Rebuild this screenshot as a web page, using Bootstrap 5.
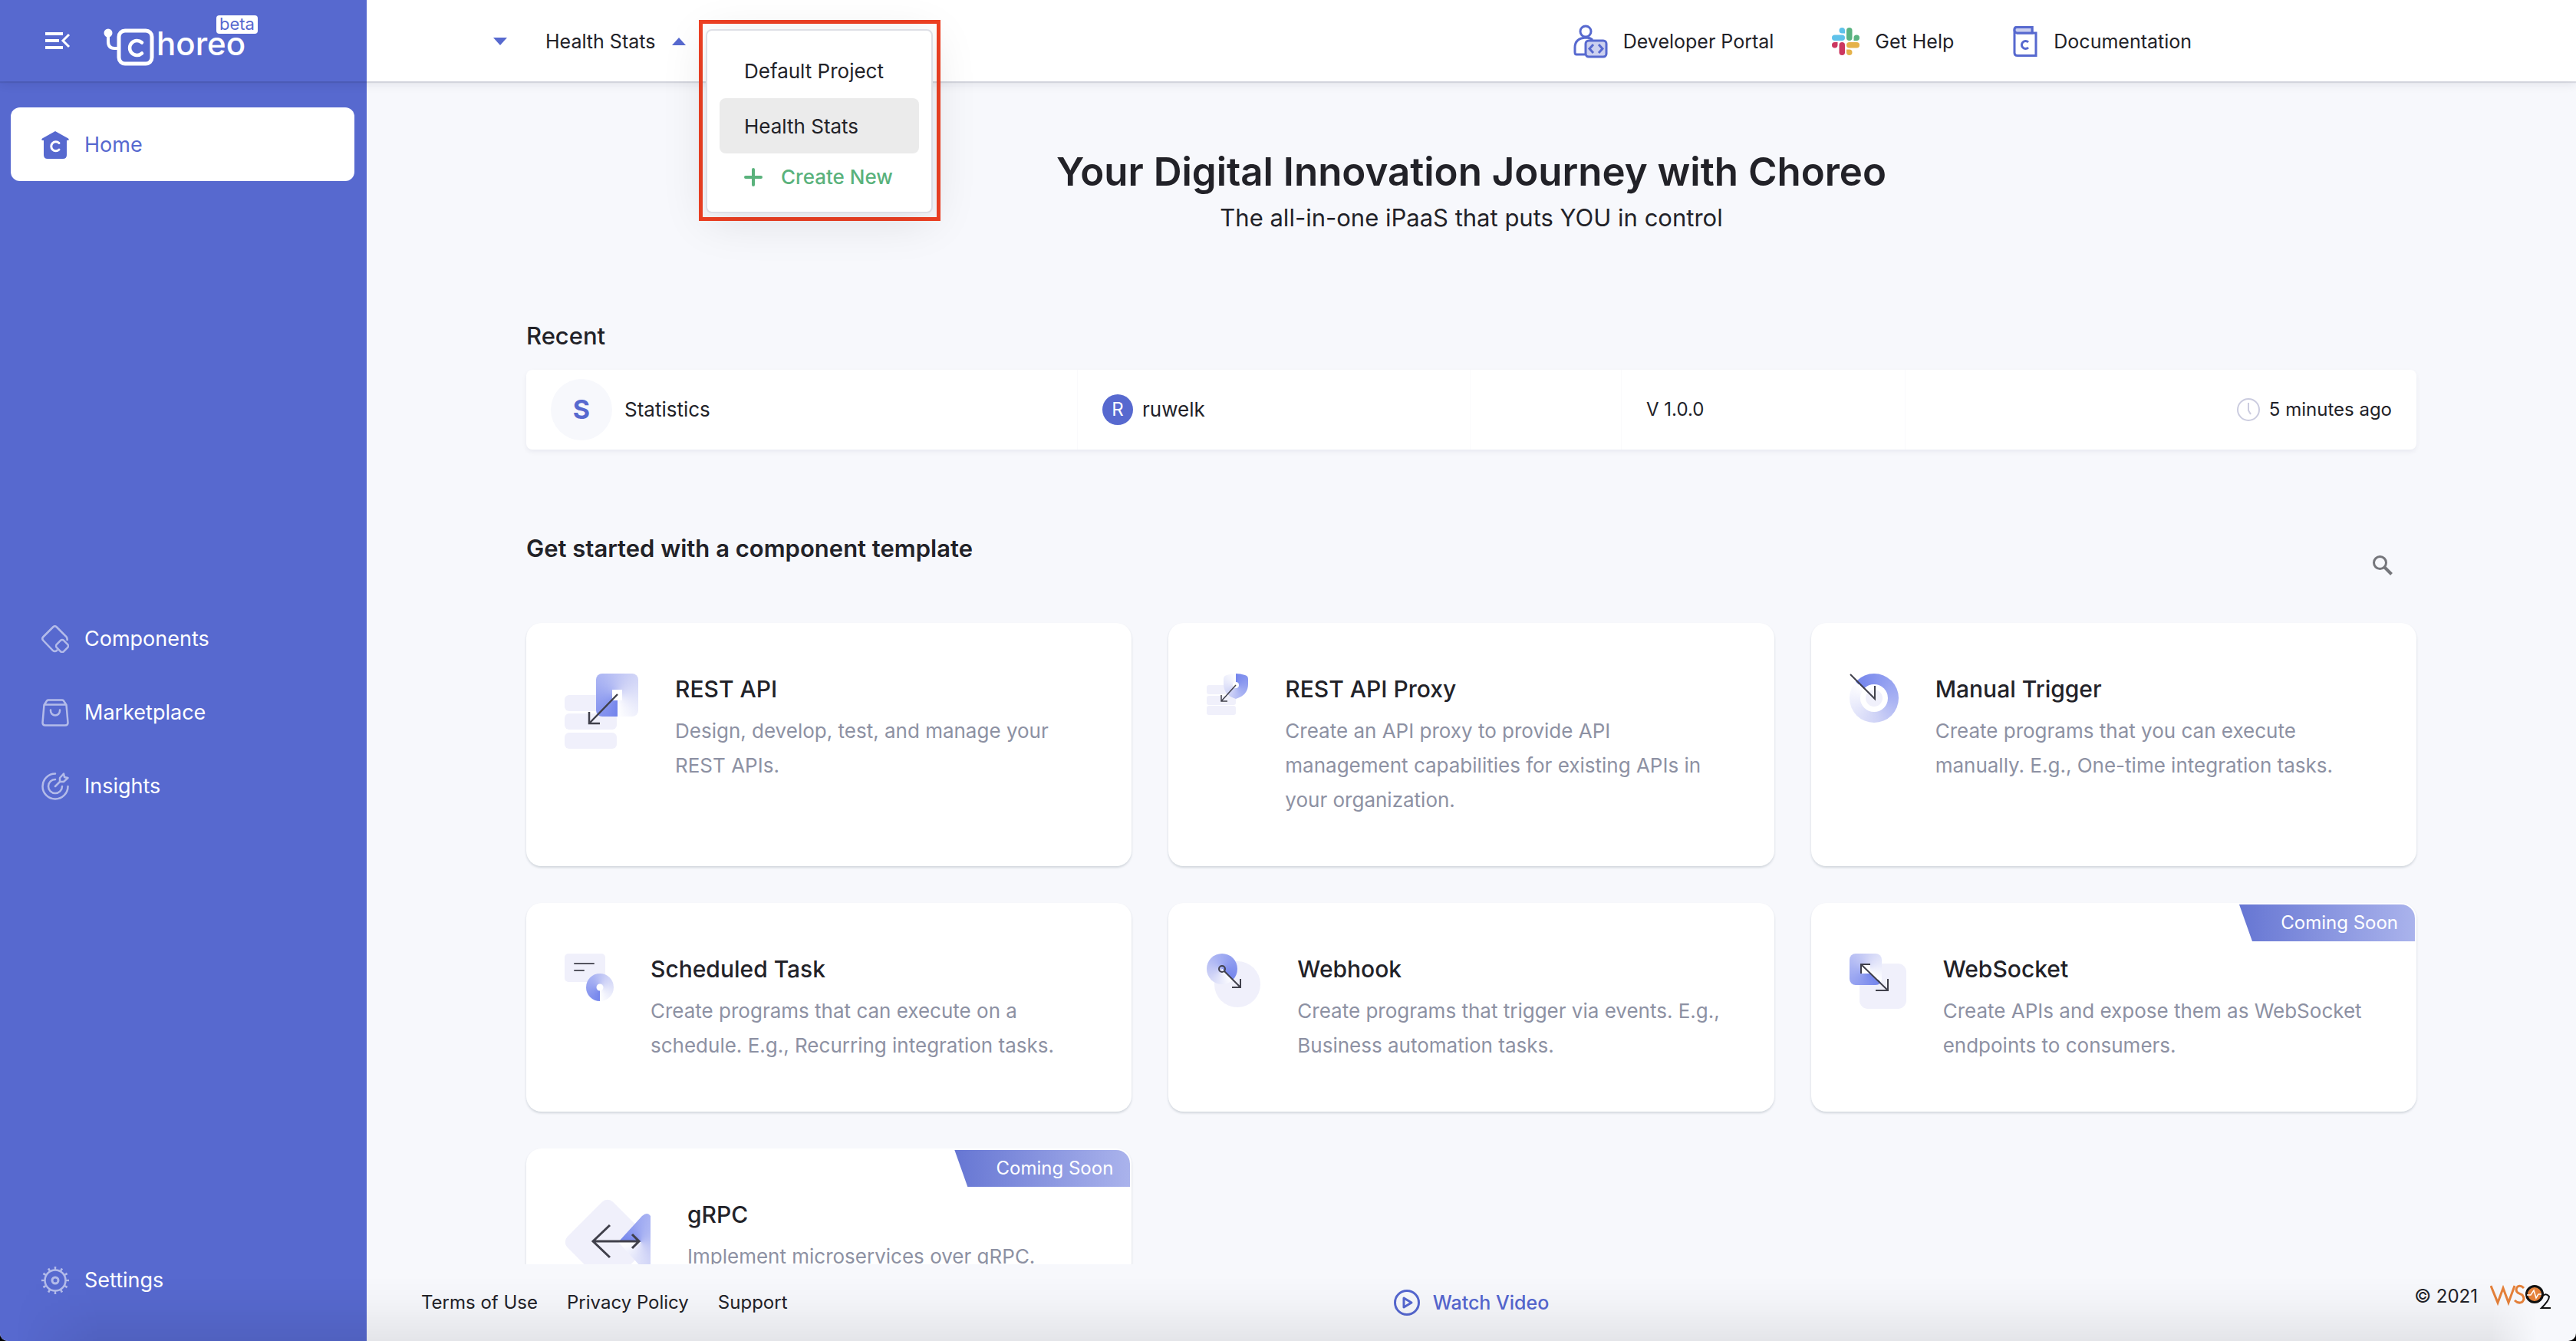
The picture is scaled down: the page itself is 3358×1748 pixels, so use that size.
<!DOCTYPE html>
<html lang="en">
<head>
<meta charset="utf-8">
<meta name="viewport" content="width=device-width, initial-scale=1">
<title>Choreo - Home</title>
<link href="https://cdn.jsdelivr.net/npm/bootstrap@5.3.0/dist/css/bootstrap.min.css" rel="stylesheet">
<style>
:root { --brand: #5769cf; --ink: #222228; --muted: #8d91a3; --page: #f7f8fc; }
html { background: #000; }
body { font-family: Inter, "Liberation Sans", sans-serif; font-size: 24px; line-height: 32px; color: var(--ink); background: #000; }
a { color: inherit; text-decoration: none; }
svg { display: block; flex: none; }
.app { height: 100vh; overflow: hidden; background: var(--page); border-radius: 0 0 10px 10px; }
.app::after { content: ""; position: absolute; inset: auto 0 0 0; height: 84px; pointer-events: none;
  background: linear-gradient(transparent, rgba(0,0,0,.02) 40%, rgba(0,0,0,.075));
  -webkit-mask-image: linear-gradient(90deg, transparent 20px, #000 130px, #000 calc(100% - 110px), transparent calc(100% - 50px)); }

/* header */
.topbar { height: 106px; z-index: 5; font-size: 25px; box-shadow: 0 2px 1px rgba(20,25,60,.10), 0 4px 12px rgba(20,25,60,.09); }
.brand { width: 478px; background: var(--brand); padding-left: 59px; gap: 42px; }
.logo { margin-top: 18px; }
.topmain { padding: 2px 501px 0 160px; }
.plain { border: 0; background: none; padding: 0; color: inherit; font: inherit; }
.beta { left: 147px; top: -15px; width: 54px; height: 24px; border-radius: 4px; background: #fff; color: var(--brand); font-size: 22px; line-height: 23px; text-align: center; }
.project { margin-left: 49px; gap: 21px; }
.picker { left: 911px; top: 26px; border: 5px solid #ee4023; padding: 7px 5px 5px 4px; width: 315px; }
.picker .dropdown-menu { position: static; width: 100%; min-width: 0; border: 2px solid #dedfe6; border-radius: 8px; padding: 16px; font-size: 26px; color: var(--ink); box-shadow: 0 10px 60px rgba(0,0,0,.10); }
.picker .dropdown-item { color: inherit; height: 72px; padding: 2px 0 0 32px; border-radius: 8px; display: flex; align-items: center; }
.picker .dropdown-item.active { background: #ebebeb; }
.picker .create { height: 60px; color: #5ab27c; font-weight: 500; gap: 24px; }
.toplinks { gap: 76px; }
.toplinks a { gap: 20px; }

/* sidebar */
.side { width: 478px; background: var(--brand); color: #fff; padding: 34px 16px 32px 14px; font-size: 27px; }
.side a { height: 96px; padding: 2px 0 0 40px; gap: 20px; border-radius: 12px; }
.side a.current { background: #fff; color: var(--brand); }
.side svg { opacity: .55; }
.side a.current svg { opacity: 1; }

/* content */
.work { min-height: 0; }
.pane { min-width: 0; }
.content { padding: 90px 208px 0; }
.hero { font-size: 51px; line-height: 56px; font-weight: 600; margin: 0; }
.tagline { font-size: 31px; line-height: 40px; margin: 12px 0 114px; }
.sect { font-size: 31px; line-height: 40px; font-weight: 500; margin: 0; }
.recent { display: grid; grid-template-columns: 718fr 512fr 197fr 370fr 667fr; margin: 24px 0 109px; height: 104px; background: #fff; border-radius: 8px; box-shadow: 0 3px 6px rgba(20,25,60,.06); }
.recent > div { padding: 0 32px; border-left: 1px solid #fafafc; gap: 12px; }
.recent > div:first-child { border: 0; gap: 16px; }
.name { font-size: 26px; }
.big-dot { width: 80px; height: 80px; background: var(--page); color: var(--brand); font-size: 34px; font-weight: 700; }
.small-dot { width: 40px; height: 40px; background: var(--brand); color: #fff; font-size: 24px; }
.finder { height: 117px; padding-right: 31px; }
.finder .sect { font-weight: 600; }
.finder button { margin-top: 29px; }
.tiles { display: grid; grid-template-columns: repeat(3, minmax(0, 1fr)); gap: 48px; }
.tile { background: #fff; border-radius: 20px; padding: 66px 50px 64px; gap: 48px; box-shadow: 0 2px 3px rgba(40,60,80,.18); }
.tile h3 { font-size: 30px; line-height: 40px; font-weight: 500; margin: 0 0 12px; }
.tile p { font-size: 26px; line-height: 45px; margin: 0; color: var(--muted); }
.ribbon { top: 2px; right: 2px; width: 229px; height: 48px; padding-right: 22px; border-top-right-radius: 18px; color: #fff; text-align: right; line-height: 48px;
  background: linear-gradient(90deg, #6676d3, #aab3ec); clip-path: polygon(0 0, 100% 0, 100% 100%, 17px 100%); }
.cone { width: 100%; height: 100%; }

/* footer */
.foot { display: grid; grid-template-columns: minmax(0, 1fr) auto minmax(0, 1fr); height: 100px; padding: 0 32px; }
.foot .links { gap: 38px; padding-left: 39px; }
.watch { color: #5567d0; font-size: 25px; font-weight: 500; gap: 17px; }
.copy { gap: 16px; padding-bottom: 16px; }
</style>
</head>
<body>
<div class="app d-flex flex-column position-relative">
  <header class="topbar d-flex position-relative flex-shrink-0">
    <div class="brand d-flex align-items-center">
      <button class="plain" aria-label="Collapse menu">
        <svg width="34" height="24" viewBox="0 0 34 24" fill="none" stroke="#fff" stroke-width="4"><path d="M0 3H23M0 12H18M0 21H23"/><path d="M31 4L23 12L31 20" stroke-width="3"/></svg>
      </button>
      <a href="#" class="logo position-relative" aria-label="Choreo beta">
        <svg width="200" height="54" viewBox="0 0 200 54" fill="none" stroke="#fff" overflow="visible">
          <circle cx="6" cy="8" r="5.500" fill="#fff" stroke="none"/>
          <path d="M6 10V19Q6 28 14 28H20" stroke-width="4"/>
          <rect x="20" y="5" width="43" height="43" rx="8" stroke-width="5"/>
          <path d="M50 20.500A9.500 9.500 0 1 0 50 34.500" stroke-width="4.500" stroke-linecap="round"/>
          <text x="69" y="37" font-family="Inter, sans-serif" font-size="42" font-weight="500" fill="#fff" stroke="none">horeo</text>
        </svg>
        <span class="beta position-absolute">beta</span>
      </a>
    </div>
    <div class="topmain bg-white d-flex align-items-center flex-grow-1">
      <button class="plain ps-1" aria-label="Choose organization"><svg width="20" height="12" viewBox="0 0 20 12"><path d="M1 1H19L10 11Z" fill="#5769cf"/></svg></button>
      <button class="plain project d-flex align-items-center" aria-expanded="true">Health Stats
        <svg width="20" height="12" viewBox="0 0 20 12"><path d="M1 11H19L10 1Z" fill="#5769cf"/></svg></button>
      <nav class="toplinks d-flex ms-auto">
        <a href="#" class="d-flex align-items-center">
          <svg width="46" height="44" viewBox="0 0 46 44" fill="none" stroke="#5769cf" stroke-width="3"><circle cx="17" cy="9" r="7"/><path d="M16 39H5Q3 39 3 36V30Q3 18 17 17Q23 17 26 20"/><rect x="17" y="21" width="27" height="21" rx="4" fill="#ccd0ef"/><path d="M27 26L22 31.500L27 37M34 26L39 31.500L34 37"/></svg>
          Developer Portal</a>
        <a href="#" class="d-flex align-items-center">
          <svg width="36" height="36" viewBox="0 0 36 36"><g fill="#5fc2ea"><rect x="0" y="9.500" width="17" height="7.500" rx="3.750"/><path d="M17 7.500H13.300A3.750 3.750 0 1 1 17 3.750Z"/></g><g fill="#5bb381"><rect x="19" y="0" width="7.500" height="17" rx="3.750"/><path d="M28.500 17V13.300A3.750 3.750 0 1 1 32.200 17Z"/></g><g fill="#e5b24a"><rect x="19" y="19" width="17" height="7.500" rx="3.750"/><path d="M19 28.500H22.700A3.750 3.750 0 1 1 19 32.200Z"/></g><g fill="#cc3760"><rect x="9.500" y="19" width="7.500" height="17" rx="3.750"/><path d="M7.500 19V22.700A3.750 3.750 0 1 1 3.750 19Z"/></g></svg>
          Get Help</a>
        <a href="#" class="d-flex align-items-center">
          <svg width="34" height="42" viewBox="0 0 34 42" fill="none" stroke="#5769cf" stroke-width="3"><path d="M26 10V2.500H6Q3 2.500 3 6V36Q3 39.500 7 39.500H31V10H6" fill="#fff"/><path d="M26 10V2.500H6Q3 2.500 3 6T6 10Z" fill="#ccd0ef"/><path d="M21 22A5 5 0 1 0 21 29"/></svg>
          Documentation</a>
      </nav>
    </div>
    <div class="picker position-absolute">
      <ul class="dropdown-menu show m-0">
        <li><a class="dropdown-item" href="#">Default Project</a></li>
        <li><a class="dropdown-item active" href="#">Health Stats</a></li>
        <li><a class="dropdown-item create" href="#"><svg width="24" height="24" viewBox="0 0 24 24" stroke="#5ab27c" stroke-width="4" stroke-linecap="round"><path d="M12 2V22M2 12H22"/></svg>Create New</a></li>
      </ul>
    </div>
  </header>

  <div class="work d-flex flex-grow-1">
    <nav class="side d-flex flex-column justify-content-between flex-shrink-0">
      <a href="#" class="current d-flex align-items-center">
        <svg width="36" height="36" viewBox="0 0 36 36"><path d="M18 0L35 9.500Q37 12 34 12H33V31Q33 36 28 36H8Q3 36 3 31V12H2Q-1 12 1 9.500Z" fill="#5769cf"/><path d="M23 15.500A6 6 0 1 0 23 24" fill="none" stroke="#fff" stroke-width="3" stroke-linecap="round"/></svg>
        Home</a>
      <div>
        <a href="#" class="d-flex align-items-center">
          <svg width="36" height="36" viewBox="0 0 36 36" fill="none" stroke="#fff" stroke-width="2.500"><path d="M21 32L20 33Q17.500 35 15 33L2.500 20Q0 17.500 2.500 15L15 2.500Q17.500 0 20 2.500L32.500 15Q34 17 33.500 20"/><rect x="20.500" y="20.500" width="13" height="13" rx="3" transform="rotate(45 27 27)"/></svg>
          Components</a>
        <a href="#" class="d-flex align-items-center">
          <svg width="36" height="36" viewBox="0 0 36 36" fill="none" stroke="#fff" stroke-width="2.500"><path d="M3.500 8L7 2.500Q8 1.500 9 1.500H27Q28 1.500 29 2.500L32.500 8L34.500 31Q34.500 34.500 31 34.500H5Q1.500 34.500 1.500 31ZM3.500 7.500H32.500"/><path d="M12 14.500V15.500A6 6 0 0 0 24 15.500V14.500" stroke-linecap="round"/></svg>
          Marketplace</a>
        <a href="#" class="d-flex align-items-center">
          <svg width="36" height="36" viewBox="0 0 36 36" fill="none" stroke="#fff" stroke-width="2.500" stroke-linecap="round" stroke-linejoin="round"><path d="M18 1.500A16.500 16.500 0 1 0 34.500 18M18 9A9 9 0 1 0 27 18M18 18L24 12M24 12V7L29 1.500L30 6L34.500 7L29 12Z"/></svg>
          Insights</a>
      </div>
      <a href="#" class="d-flex align-items-center">
        <svg width="36" height="36" viewBox="0 0 36 36" fill="none" stroke="#fff"><circle cx="18" cy="18" r="13.500" stroke-width="2.500"/><circle cx="18" cy="18" r="4" stroke-width="3"/><circle cx="18" cy="18" r="16" stroke-width="4" pathLength="120" stroke-dasharray="3 7" stroke-dashoffset="1.500"/></svg>
        Settings</a>
    </nav>

    <div class="pane d-flex flex-column flex-grow-1">
      <main class="content flex-grow-1 overflow-hidden">
        <div class="text-center">
          <h1 class="hero">Your Digital Innovation Journey with Choreo</h1>
          <p class="tagline">The all-in-one iPaaS that puts YOU in control</p>
        </div>
        <h2 class="sect">Recent</h2>
        <div class="recent">
          <div class="name d-flex align-items-center"><span class="big-dot rounded-circle d-flex align-items-center justify-content-center">S</span>Statistics</div>
          <div class="name d-flex align-items-center"><span class="small-dot rounded-circle d-flex align-items-center justify-content-center">R</span>ruwelk</div>
          <div></div>
          <div class="d-flex align-items-center">V 1.0.0</div>
          <div class="d-flex align-items-center justify-content-end">
            <svg width="30" height="30" viewBox="0 0 30 30" fill="none" stroke="#cbccdf" stroke-width="2"><circle cx="15" cy="15" r="14"/><path d="M15 6V16L18 21"/></svg>
            5 minutes ago</div>
        </div>
        <div class="finder d-flex justify-content-between align-items-start">
          <h2 class="sect">Get started with a component template</h2>
          <button class="plain" aria-label="Search">
            <svg width="26" height="26" viewBox="0 0 26 26" fill="none" stroke="#75767b" stroke-width="3"><circle cx="9.500" cy="9.500" r="8"/><path d="M15 15L24.500 24.500" stroke-width="4"/></svg></button>
        </div>

        <div class="tiles">
          <article class="tile d-flex align-items-start">
            <svg width="96" height="98" viewBox="0 0 96 98"><g fill="#f0f0fb"><rect y="28" width="68" height="21" rx="6"/><rect y="52" width="68" height="21" rx="6"/><rect y="77" width="68" height="21" rx="6"/></g>
              <foreignObject x="41" y="0" width="55" height="56"><div class="cone" style="border-radius:8px;background:conic-gradient(from 180deg,#7485ec,#a9b3f3 35%,#cdd1f6 60%,#fff)"></div></foreignObject>
              <rect x="62" y="21" width="13" height="14" fill="#fff"/><path d="M69 27L32 65M32 50V65H46" fill="none" stroke="#40404b" stroke-width="2.500"/></svg>
            <div><h3>REST API</h3><p>Design, develop, test, and manage your REST APIs.</p></div>
          </article>
          <article class="tile d-flex align-items-start">
            <svg width="54" height="54" viewBox="0 0 54 54"><g fill="#f0f0fb"><rect y="15" width="38" height="12" rx="3"/><rect y="29" width="38" height="12" rx="3"/><rect y="42" width="38" height="12" rx="3"/></g>
              <foreignObject x="22" y="0" width="32" height="33"><div class="cone" style="clip-path:path('M16 0Q22 0 28 2Q32 3 32 7V14Q32 28 16 33Q0 28 0 14V7Q0 3 4 2Q10 0 16 0Z');background:conic-gradient(#7485ec,#a9b3f3 40%,#cdd1f6 60%,#fff)"></div></foreignObject>
              <circle cx="38" cy="15" r="4" fill="#fff"/><path d="M38 15L19 36M19 28V36H27" fill="none" stroke="#40404b" stroke-width="1.500"/></svg>
            <div><h3>REST API Proxy</h3><p>Create an API proxy to provide API management capabilities for existing APIs in your organization.</p></div>
          </article>
          <article class="tile d-flex align-items-start">
            <svg width="64" height="64" viewBox="0 0 64 64"><foreignObject width="64" height="64"><div class="cone rounded-circle" style="background:conic-gradient(from -48deg,#7485ec,#a9b3f3 40%,#cdd1f6 60%,#fff)"></div></foreignObject>
              <circle cx="32" cy="32" r="18" fill="#fff"/><circle cx="32" cy="32" r="11" fill="#f0f0fb"/><path d="M1 1L33 33V16" fill="none" stroke="#40404b" stroke-width="2"/></svg>
            <div><h3>Manual Trigger</h3><p>Create programs that you can execute manually. E.g., One-time integration tasks.</p></div>
          </article>
          <article class="tile d-flex align-items-start">
            <svg width="64" height="62" viewBox="0 0 64 62"><rect width="53" height="37" rx="5" fill="#f0f0fb"/><path d="M13 13H38M13 22H25" stroke="#55555f" stroke-width="2" stroke-linecap="round"/>
              <foreignObject x="28" y="26" width="36" height="36"><div class="cone rounded-circle" style="background:conic-gradient(from 180deg,#7485ec,#a9b3f3 40%,#cdd1f6 60%,#fff)"></div></foreignObject><circle cx="46" cy="44" r="4.500" fill="#fff"/></svg>
            <div><h3>Scheduled Task</h3><p>Create programs that can execute on a schedule. E.g., Recurring integration tasks.</p></div>
          </article>
          <article class="tile d-flex align-items-start">
            <svg width="70" height="70" viewBox="0 0 70 70"><circle cx="40" cy="40" r="30" fill="#f0f0fb"/>
              <foreignObject width="40" height="40"><div class="cone rounded-circle" style="background:conic-gradient(from 135deg,#fff,#cdd1f6 30%,#a9b3f3 55%,#7485ec)"></div></foreignObject>
              <g fill="none" stroke="#40404b" stroke-width="2"><circle cx="20" cy="20" r="4"/><path d="M23 23L44 44M44 33V44H33"/></g></svg>
            <div><h3>Webhook</h3><p>Create programs that trigger via events. E.g., Business automation tasks.</p></div>
          </article>
          <article class="tile d-flex align-items-start position-relative">
            <span class="ribbon position-absolute">Coming Soon</span>
            <svg width="74" height="72" viewBox="0 0 74 72"><rect x="13" y="13" width="61" height="59" rx="11" fill="#f0f0fb"/>
              <foreignObject width="42" height="41"><div class="cone" style="border-radius:8px;background:conic-gradient(from 130deg,#7485ec,#a9b3f3 40%,#cdd1f6 65%,#fff)"></div></foreignObject>
              <rect x="15" y="14" width="12" height="12" fill="#fff"/><path d="M15 14L50 48M15 26V14H27M34 48H50V33" fill="none" stroke="#40404b" stroke-width="2"/></svg>
            <div><h3>WebSocket</h3><p>Create APIs and expose them as WebSocket endpoints to consumers.</p></div>
          </article>
          <article class="tile d-flex align-items-start position-relative">
            <span class="ribbon position-absolute">Coming Soon</span>
            <svg width="112" height="112" viewBox="0 0 112 112"><rect x="14" y="14" width="84" height="84" rx="10" transform="rotate(45 56 56)" fill="#f0f0fb"/>
              <foreignObject x="70" y="18" width="42" height="76"><div class="cone" style="clip-path:path('M0 38L31 4Q38 -2 42 4V72Q38 78 31 72Z');background:conic-gradient(from 270deg at 70% 50%,#7485ec,#a9b3f3 30%,#cdd1f6 65%,#fff)"></div></foreignObject>
              <path d="M37 55H97M59 34L37 55L59 76M88 46L97 55L88 64" fill="none" stroke="#40404b" stroke-width="3"/></svg>
            <div><h3>gRPC</h3><p>Implement microservices over gRPC.</p></div>
          </article>
        </div>
      </main>

      <footer class="foot align-items-center flex-shrink-0">
        <div class="links d-flex"><a href="#">Terms of Use</a><a href="#">Privacy Policy</a><a href="#">Support</a></div>
        <a href="#" class="watch d-flex align-items-center"><svg width="34" height="34" viewBox="0 0 34 34" fill="none" stroke="#5567d0" stroke-width="3"><circle cx="17" cy="17" r="15.500"/><path d="M13 11L23 17L13 23Z" stroke-linejoin="round"/></svg>Watch Video</a>
        <div class="copy d-flex align-items-center justify-content-end">© 2021
          <svg width="80" height="34" viewBox="0 0 80 34" fill="none"><path d="M1 3L10 25L17 6L24 25L32 3" stroke="#e5813a" stroke-width="3"/><path d="M44 6Q40 2 36 4Q32 8 36 12L42 15Q46 20 42 24Q37 27 32 22" stroke="#e5813a" stroke-width="3"/><circle cx="58" cy="14" r="10.500" fill="#e5813a" stroke="#111" stroke-width="3"/><path d="M48 15H53L57 9L60 19L63 14H67" stroke="#fff" stroke-width="1.500"/><path d="M67 18Q72 11 77 17Q77 22 67 32H79" stroke="#111" stroke-width="2"/></svg></div>
      </footer>
    </div>
  </div>
</div>
<script src="https://cdn.jsdelivr.net/npm/bootstrap@5.3.0/dist/js/bootstrap.bundle.min.js"></script>
</body>
</html>
